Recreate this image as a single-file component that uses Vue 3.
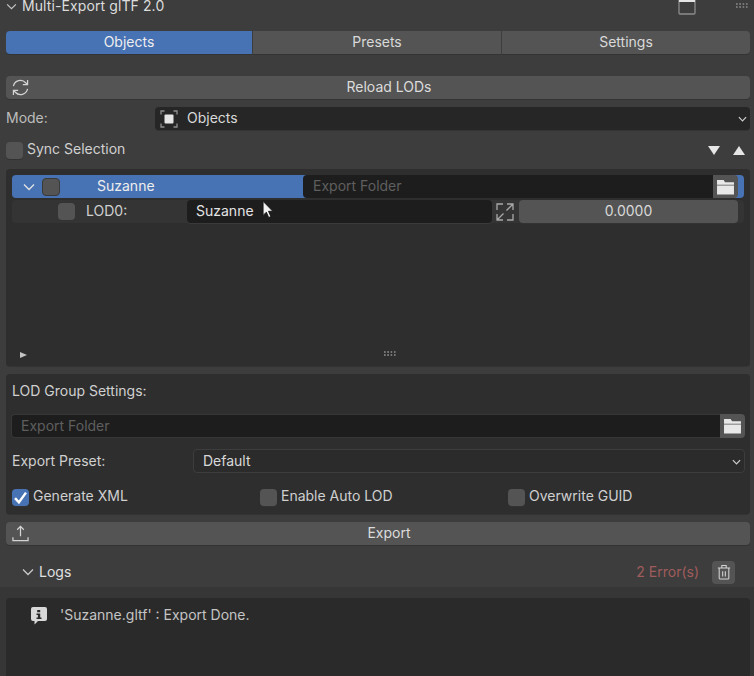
<template>
  <div class="panel">
    <div class="panel-top">
      <div class="head">
        <svg class="chev-head" viewBox="0 0 12 8"><path d="M1 1.5 6 6.5 11 1.5" /></svg>
        <span class="head-title">Multi-Export glTF 2.0</span>
        <svg class="win-icon" viewBox="0 0 18 22">
          <rect x="1" y="1" width="16" height="20" rx="1" />
          <rect x="1" y="1" width="16" height="8" class="win-fill" />
        </svg>
        <span class="grip head-grip"></span>
      </div>

      <div class="tabs">
        <div v-for="tab in tabs" :key="tab" class="tab" :class="{ active: tab === activeTab }">{{ tab }}</div>
      </div>

      <div class="btn reload">
        <svg class="btn-icon" viewBox="0 0 18 18">
          <path d="M1.500 7.500a7.600 7.600 0 0 1 13-3.500L16.500 6M16.500 1v5h-5" />
          <path d="M16.500 10.500a7.600 7.600 0 0 1-13 3.500L1.500 12M1.500 17v-5h5" />
        </svg>
        Reload LODs
      </div>

      <div class="mode-row">
        <span class="mode-label">Mode:</span>
        <div class="select dark">
          <svg class="obj-icon" viewBox="0 0 18 18">
            <rect x="4.500" y="4.500" width="9" height="9" rx="1" class="obj-core" />
            <path d="M1 4.500V1h3.500M13.500 1H17v3.500M17 13.500V17h-3.500M4.500 17H1v-3.500" />
          </svg>
          <span class="up-text">Objects</span>
          <svg class="chev-small" viewBox="0 0 10 6"><path d="M1 1 5 5 9 1" /></svg>
        </div>
      </div>

      <div class="sync-row">
        <span class="check"></span>
        <span class="check-label">Sync Selection</span>
        <span class="tri down"></span>
        <span class="tri up"></span>
      </div>

      <div class="list-box">
        <div class="row-group">
          <div class="group-main">
            <svg class="chev-row" viewBox="0 0 12 8"><path d="M1 1.500 6 6.500 11 1.500" /></svg>
            <span class="check outlined"></span>
            <span class="group-name up-text">Suzanne</span>
          </div>
          <div class="field folder-field">Export Folder</div>
          <div class="folder-btn">
            <svg viewBox="0 0 20 17" class="folder-icon"><path d="M1 1h7l1.500 2.500H19V6H1zM1 7h18v9.500H1z" /></svg>
          </div>
          <div class="row-end"></div>
        </div>

        <div class="row-lod">
          <span class="check small-gap"></span>
          <span class="lod-label up-text">LOD0:</span>
          <div class="field name-field">Suzanne</div>
          <svg class="expand-icon" viewBox="0 0 18 18">
            <path d="M1 7V1h6M11 17h6v-6M11 1h6v6M17 1 10.500 7.500M1 11v6h6M1 17l6.500-6.500" />
          </svg>
          <div class="number">0.0000</div>
        </div>

        <div class="list-foot">
          <span class="foot-arrow"></span>
          <span class="grip foot-grip"></span>
        </div>
      </div>

      <div class="lod-box">
        <div class="lod-title">LOD Group Settings:</div>
        <div class="folder-line">
          <div class="field wide-field">Export Folder</div>
          <div class="folder-btn wide-btn">
            <svg viewBox="0 0 20 17" class="folder-icon"><path d="M1 1h7l1.500 2.500H19V6H1zM1 7h18v9.500H1z" /></svg>
          </div>
        </div>
        <div class="preset-row">
          <span class="preset-label up-text">Export Preset:</span>
          <div class="select preset">
            <span class="up-text">Default</span>
            <svg class="chev-small" viewBox="0 0 10 6"><path d="M1 1 5 5 9 1" /></svg>
          </div>
        </div>
        <div class="options">
          <div v-for="opt in options" :key="opt.label" class="option">
            <span class="check" :class="{ on: opt.on }">
              <svg v-if="opt.on" viewBox="0 0 14 14"><path d="M2.500 7.500 5.700 11 11.500 3" /></svg>
            </span>
            <span class="check-label">{{ opt.label }}</span>
          </div>
        </div>
      </div>

      <div class="btn export">
        <svg class="btn-icon" viewBox="0 0 18 18">
          <path d="M9 12V1.500M5.500 5 9 1.500 12.500 5M1 13v3.500h16V13" />
        </svg>
        Export
      </div>

      <div class="logs-head">
        <svg class="chev-logs" viewBox="0 0 12 8"><path d="M1 1.500 6 6.500 11 1.500" /></svg>
        <span class="logs-title up-text">Logs</span>
        <span class="errors up-text">2 Error(s)</span>
        <div class="trash">
          <svg viewBox="0 0 16 18">
            <path d="M1 4.500h14M2.500 4.500v11.500a1 1 0 0 0 1 1h9a1 1 0 0 0 1-1V4.500M5.500 4V1.500h5V4M6.500 8v6M9.500 8v6" />
          </svg>
        </div>
      </div>
    </div>

    <div class="logs-area">
      <div class="log-box">
        <svg class="info-icon" viewBox="0 0 18 20">
          <path d="M3 1h12a2 2 0 0 1 2 2v10a2 2 0 0 1-2 2H8l-3.500 3.500V15H3a2 2 0 0 1-2-2V3a2 2 0 0 1 2-2z" />
          <path class="info-i" d="M7.200 4h3v2.200h-3zM6.500 7.500h3.700v4h1.300v1.500H6.500v-1.500h1.400V9H6.500z" />
        </svg>
        <span class="log-text">'Suzanne.gltf' : Export Done.</span>
      </div>
    </div>

    <svg class="cursor" viewBox="0 0 12 18">
      <path d="M1 1v13l3-3 2.200 5 2-1-2.200-4.800H10z" />
    </svg>
  </div>
</template>

<script setup>
const tabs = ['Objects', 'Presets', 'Settings'];
const activeTab = 'Objects';

const options = [
  { label: 'Generate XML', on: true },
  { label: 'Enable Auto LOD', on: false },
  { label: 'Overwrite GUID', on: false },
];
</script>

<style>
html,
body {
  margin: 0;
  background: #363636;
  overflow: hidden;
}
</style>

<style scoped>
.panel {
  position: relative;
  width: 754px;
  height: 676px;
  overflow: hidden;
  background: #363636;
  color: #d9d9d9;
  font-family: Inter, "Liberation Sans", sans-serif;
  font-size: 14px;
  line-height: 17px;
}

svg {
  display: block;
  flex: none;
  fill: none;
  stroke: currentColor;
  stroke-width: 1.3;
}

.up-text {
  margin-bottom: 2px;
}

.panel-top {
  background: #3d3d3d;
  height: 587px;
  padding: 0 4px 0 6px;
  box-sizing: border-box;
}

.head {
  display: flex;
  align-items: center;
  height: 12px;
}

.chev-head {
  width: 11px;
  height: 7px;
  margin-right: 5px;
  color: #c8c8c8;
}

.head-title {
  color: #dcdcdc;
  line-height: 12px;
  letter-spacing: 0.1px;
}

.win-icon {
  width: 18px;
  height: 22px;
  margin-left: auto;
  margin-right: 40px;
  margin-bottom: 4px;
  color: #8c8c8c;
}

.win-fill {
  fill: #e4e4e4;
  stroke: none;
}

.grip {
  display: block;
  width: 13px;
  height: 6px;
  background-image: radial-gradient(circle at 1px 1px, #777 1px, transparent 1px);
  background-size: 3.300px 3px;
}

.head-grip {
  margin-right: 1px;
}

.tabs {
  display: flex;
  gap: 1px;
  height: 23px;
  margin-top: 19px;
}

.tab {
  flex: 0 0 248px;
  display: flex;
  align-items: center;
  justify-content: center;
  box-sizing: border-box;
  padding-bottom: 2px;
  background: #545454;
  color: #d9d9d9;
  box-shadow: 0 1px 0 #333;
}

.tab:first-child {
  flex-basis: 246px;
  border-radius: 4px 0 0 4px;
}

.tab:last-child {
  border-radius: 0 4px 4px 0;
}

.tab.active {
  background: #4772b3;
  color: #eee;
}

.btn {
  position: relative;
  display: flex;
  align-items: center;
  justify-content: center;
  box-sizing: border-box;
  height: 23px;
  padding: 0 0 2px 22px;
  background: #545454;
  border-radius: 4px;
  box-shadow: 0 1px 0 #333;
  color: #dcdcdc;
}

.btn-icon {
  position: absolute;
  left: 6px;
  top: 3px;
  width: 17px;
  height: 17px;
  color: #d4d4d4;
}

.reload {
  margin-top: 22px;
}

.mode-row {
  display: flex;
  align-items: center;
  height: 23px;
  margin-top: 8px;
}

.mode-label {
  width: 149px;
  margin-bottom: 2px;
  color: #bcbcbc;
}

.select {
  flex: 1;
  display: flex;
  align-items: center;
  height: 23px;
  border-radius: 4px;
  position: relative;
}

.select.dark {
  background: #262626;
  box-shadow: 0 1px 0 #333;
}

.obj-icon {
  width: 18px;
  height: 18px;
  margin: 0 9px 0 5px;
  color: #8f8f8f;
}

.obj-core {
  fill: #e6e6e6;
  stroke: none;
}

.chev-small {
  position: absolute;
  right: 3px;
  top: 9px;
  width: 9px;
  height: 6px;
  color: #d0d0d0;
}

.sync-row {
  display: flex;
  align-items: center;
  height: 18px;
  margin-top: 11px;
}

.check {
  flex: none;
  display: block;
  width: 17px;
  height: 17px;
  border-radius: 4px;
  background: #545454;
  box-shadow: 0 1px 0 #333;
}

.check.on {
  background: #4772b3;
  color: #fff;
}

.check.on svg {
  width: 17px;
  height: 17px;
  stroke-width: 2;
}

.check-label {
  margin-left: 4px;
  margin-bottom: 4px;
  color: #d0d0d0;
}

.tri {
  width: 0;
  height: 0;
  border-left: 6px solid transparent;
  border-right: 6px solid transparent;
}

.tri.down {
  margin-left: auto;
  border-top: 9px solid #e6e6e6;
}

.tri.up {
  margin-left: 13px;
  margin-right: 5px;
  border-bottom: 9px solid #e6e6e6;
}

.list-box {
  margin-top: 10px;
  height: 197px;
  padding: 6px;
  box-sizing: border-box;
  background: #2e2e2e;
  border-radius: 4px;
  box-shadow: 0 1px 0 #333;
  position: relative;
}

.row-group {
  display: flex;
  height: 23px;
  border-radius: 4px;
  background: #4772b3;
}

.group-main {
  width: 291px;
  display: flex;
  align-items: center;
  color: #eee;
}

.chev-row {
  width: 12px;
  height: 8px;
  margin-left: 11px;
  color: #e4e4e4;
}

.check.outlined {
  margin-left: 7px;
  width: 18px;
  height: 18px;
  box-sizing: border-box;
  border: 1px solid #3a3a3a;
  box-shadow: none;
}

.group-name {
  margin-left: 37px;
}

.field {
  display: flex;
  align-items: center;
  box-sizing: border-box;
  background: #1d1d1d;
  height: 23px;
  padding-bottom: 2px;
  color: #e4e4e4;
}

.folder-field {
  width: 410px;
  padding-left: 10px;
  border-radius: 4px 0 0 4px;
  color: #5f5f5f;
}

.folder-btn {
  width: 25px;
  height: 23px;
  display: flex;
  align-items: center;
  justify-content: center;
  background: #545454;
  border-radius: 0 4px 4px 0;
}

.folder-icon {
  width: 19px;
  height: 16px;
  fill: #e8e8e8;
  stroke: none;
}

.row-end {
  width: 6px;
}

.row-lod {
  display: flex;
  align-items: center;
  height: 23px;
  margin-top: 2px;
  background: #343434;
  border-radius: 4px;
}

.small-gap {
  margin-left: 46px;
}

.lod-label {
  width: 101px;
  margin-left: 11px;
  color: #cfcfcf;
}

.name-field {
  width: 305px;
  padding-left: 9px;
  border-radius: 4px;
  box-shadow: 0 1px 0 #3a3a3a;
}

.expand-icon {
  width: 18px;
  height: 18px;
  margin-left: 4px;
  color: #a8a8a8;
}

.number {
  display: flex;
  align-items: center;
  justify-content: center;
  box-sizing: border-box;
  width: 219px;
  height: 23px;
  padding-bottom: 2px;
  margin-left: 5px;
  background: #545454;
  border-radius: 4px;
  color: #d9d9d9;
  box-shadow: 0 1px 0 #333;
}

.list-foot {
  position: absolute;
  left: 0;
  right: 0;
  top: 181px;
  height: 10px;
}

.foot-arrow {
  position: absolute;
  left: 14px;
  top: 2px;
  width: 0;
  height: 0;
  border-top: 3px solid transparent;
  border-bottom: 3px solid transparent;
  border-left: 7px solid #c4c4c4;
}

.foot-grip {
  position: absolute;
  left: 378px;
  top: 1px;
}

.lod-box {
  margin-top: 8px;
  height: 140px;
  padding: 0 5px 0 6px;
  box-sizing: border-box;
  background: #2e2e2e;
  border-radius: 4px;
  box-shadow: 0 1px 0 #333;
}

.lod-title {
  padding-top: 8px;
  height: 40px;
  box-sizing: border-box;
  color: #d0d0d0;
}

.folder-line {
  display: flex;
  margin-left: -1px;
}

.wide-field {
  flex: 1;
  height: 24px;
  padding-left: 9px;
  border: 1px solid #373737;
  border-right: none;
  border-radius: 4px 0 0 4px;
  color: #5f5f5f;
}

.wide-btn {
  height: 24px;
}

.preset-row {
  display: flex;
  align-items: center;
  margin-top: 11px;
}

.preset-label {
  width: 181px;
  color: #d0d0d0;
}

.select.preset {
  height: 24px;
  box-sizing: border-box;
  padding-left: 9px;
  border: 1px solid #3d3d3d;
  background: #2b2b2b;
  color: #d9d9d9;
}

.options {
  display: grid;
  grid-template-columns: 248px 248px 1fr;
  margin-top: 15px;
}

.option {
  display: flex;
  align-items: center;
  height: 18px;
}

.export {
  margin-top: 8px;
}

.logs-head {
  display: flex;
  align-items: center;
  height: 24px;
  margin-top: 15px;
  padding-left: 16px;
}

.chev-logs {
  width: 12px;
  height: 8px;
  color: #c8c8c8;
}

.logs-title {
  margin-left: 5px;
  color: #e0e0e0;
}

.errors {
  margin-left: auto;
  color: #a05c5c;
}

.trash {
  width: 23px;
  height: 23px;
  margin-left: 13px;
  margin-right: 15px;
  display: flex;
  align-items: center;
  justify-content: center;
  background: #545454;
  border-radius: 4px;
  color: #d4d4d4;
}

.trash svg {
  width: 14px;
  height: 16px;
  stroke-width: 1.2;
}

.logs-area {
  height: 89px;
  padding: 11px 4px 0 6px;
  box-sizing: border-box;
}

.log-box {
  display: flex;
  height: 100px;
  padding: 8px 0 0 24px;
  box-sizing: border-box;
  background: #2a2a2a;
  border-radius: 4px;
}

.info-icon {
  width: 18px;
  height: 20px;
  fill: #d8d8d8;
  stroke: none;
}

.info-i {
  fill: #2a2a2a;
}

.log-text {
  color: #c4c4c4;
  margin-left: 12px;
}

.cursor {
  position: absolute;
  left: 262px;
  top: 200px;
  width: 13px;
  height: 20px;
  fill: #f2f2f2;
  stroke: #111;
  stroke-width: 0.8;
}
</style>
